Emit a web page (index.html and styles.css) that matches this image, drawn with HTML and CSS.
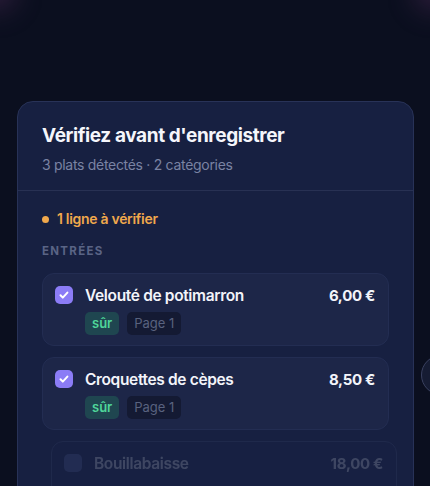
FILE: index.html
```html
<!DOCTYPE html>
<html lang="fr">
<head>
<meta charset="utf-8">
<link rel="stylesheet" href="styles.css">
</head>
<body>
<div class="glow glow-left"></div>
<div class="glow glow-right"></div>
<div class="side-btn"></div>
<main class="page">
  <section class="card">
    <header class="card-head">
      <h1 class="title">Vérifiez avant d'enregistrer</h1>
      <p class="subtitle">3 plats détectés · 2 catégories</p>
    </header>
    <div class="card-body">
      <div class="warn"><span class="warn-dot"></span>1 ligne à vérifier</div>
      <div class="cat">ENTRÉES</div>
      <div class="items">
        <div class="item">
          <div class="row">
            <span class="check"><svg viewBox="0 0 18 18" width="18" height="18"><path d="M5.5 9.3l2.3 2.3 4.6-5" fill="none" stroke="#fff" stroke-width="2" stroke-linecap="round" stroke-linejoin="round"/></svg></span>
            <span class="name">Velouté de potimarron</span>
            <span class="price">6,00 €</span>
          </div>
          <div class="tags"><span class="tag tag-ok">sûr</span><span class="tag tag-page">Page 1</span></div>
        </div>
        <div class="item">
          <div class="row">
            <span class="check"><svg viewBox="0 0 18 18" width="18" height="18"><path d="M5.5 9.3l2.3 2.3 4.6-5" fill="none" stroke="#fff" stroke-width="2" stroke-linecap="round" stroke-linejoin="round"/></svg></span>
            <span class="name">Croquettes de cèpes</span>
            <span class="price">8,50 €</span>
          </div>
          <div class="tags"><span class="tag tag-ok">sûr</span><span class="tag tag-page">Page 1</span></div>
        </div>
        <div class="item item-ghost">
          <div class="row">
            <span class="check check-empty"></span>
            <span class="name">Bouillabaisse</span>
            <span class="price">18,00 €</span>
          </div>
        </div>
      </div>
    </div>
  </section>
</main>
</body>
</html>
```
FILE: styles.css
```css
html, body {
  margin: 0;
  padding: 0;
  height: 100%;
  overflow: hidden;
}
body {
  background: #0b0f1f;
  font-family: Inter, "Noto Sans", sans-serif;
  color: #f3f4fa;
  position: relative;
}
.glow {
  position: absolute;
  top: -30px;
  width: 40px;
  height: 40px;
  border-radius: 50%;
  background: rgba(120, 60, 120, 0.35);
  filter: blur(14px);
}
.glow-left { left: -25px; }
.glow-right { right: -25px; }
.side-btn {
  position: absolute;
  left: 421px;
  top: 355px;
  width: 40px;
  height: 40px;
  border-radius: 50%;
  border: 1.5px solid #3a4160;
  background: #161c33;
  box-sizing: border-box;
}
.page {
  padding: 101px 16px 0 17px;
}
.card {
  background: #172041;
  border: 1px solid #283257;
  border-radius: 16px;
  height: 400px;
  overflow: hidden;
}
.card-head {
  padding: 22px 24px 16px;
  border-bottom: 1px solid #283153;
}
.title {
  margin: 0;
  font-size: 19px;
  font-weight: 700;
  letter-spacing: -0.4px;
  line-height: 24px;
  color: #f5f6fb;
}
.subtitle {
  margin: 8px 0 0;
  font-size: 14px;
  line-height: 18px;
  letter-spacing: -0.3px;
  color: #7a83a3;
}
.card-body {
  padding: 19px 24px 0;
}
.warn {
  display: flex;
  align-items: center;
  gap: 8px;
  font-size: 14px;
  font-weight: 600;
  letter-spacing: -0.3px;
  color: #f0a84c;
  line-height: 18px;
}
.warn-dot {
  width: 7px;
  height: 7px;
  border-radius: 50%;
  background: #f0a84c;
}
.cat {
  margin-top: 16px;
  font-size: 11.5px;
  font-weight: 700;
  letter-spacing: 1.3px;
  color: #5a6485;
  line-height: 14px;
}
.items {
  margin-top: 15px;
  display: flex;
  flex-direction: column;
  gap: 11px;
}
.item {
  background: #1d2648;
  border: 1px solid #232d52;
  border-radius: 12px;
  padding: 12px 13px 10px 12px;
}
.row {
  display: flex;
  align-items: center;
  gap: 12px;
  height: 18px;
}
.check {
  width: 18px;
  height: 18px;
  border-radius: 5px;
  background: #8b7cf6;
  display: flex;
  flex-shrink: 0;
}
.name {
  flex: 1;
  font-size: 15.5px;
  font-weight: 600;
  letter-spacing: -0.35px;
  color: #f3f4fa;
}
.price {
  font-size: 15px;
  font-weight: 700;
  letter-spacing: -0.3px;
  color: #f3f4fa;
}
.tags {
  display: flex;
  gap: 8px;
  margin: 8px 0 0 30px;
}
.tag {
  font-size: 13px;
  line-height: 23px;
  padding: 0 7px;
  border-radius: 5px;
}
.tag-ok {
  background: #1f4650;
  color: #4fd69a;
  font-weight: 600;
}
.tag-page {
  background: #141a33;
  color: #59627f;
}
.item-ghost {
  margin-left: 9px;
  margin-right: -8px;
  padding-bottom: 30px;
  opacity: 0.18;
  background: #1d2648;
  border-color: #4a557c;
}
.check-empty {
  background: #5c66a0;
}
```
